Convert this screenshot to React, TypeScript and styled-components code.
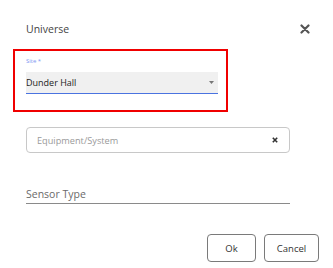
import styled, { createGlobalStyle } from "styled-components";

const GlobalStyle = createGlobalStyle`
    html, body {
        margin: 0;
        padding: 0;
        background: #ffffff;
    }
    body {
        font-family: "Open Sans", "Noto Sans", sans-serif;
        color: #333;
    }
`;

const Dialog = styled.div`
    width: 333px;
    height: 268px;
    box-sizing: border-box;
    background: #fff;
    display: flex;
    flex-direction: column;
`;

const Header = styled.div`
    display: flex;
    align-items: center;
    justify-content: space-between;
    padding: 18px 23px 0 26px;
    height: 22px;
`;

const Title = styled.div`
    font-size: 10.5px;
    line-height: 22px;
    color: #444;
`;

const CloseButton = styled.button`
    border: none;
    background: transparent;
    padding: 0;
    width: 10px;
    height: 10px;
    display: flex;
    cursor: pointer;
`;

const Highlight = styled.div`
    margin: 9px 0 0 13px;
    width: 215px;
    height: 63px;
    box-sizing: border-box;
    border: 2px solid #f00000;
    padding: 5px 0 0 11px;
`;

const FieldLabel = styled.div`
    font-size: 6px;
    line-height: 10px;
    color: #7b96f2;
    height: 10px;
`;

const Select = styled.div`
    margin-top: 6px;
    width: 192px;
    height: 22px;
    box-sizing: border-box;
    background: #f0f0f0;
    border-bottom: 1px solid #4a73e0;
    display: flex;
    align-items: center;
    justify-content: space-between;
    padding: 0 4px 0 0;
`;

const SelectValue = styled.span`
    font-size: 9px;
    color: #222;
`;

const Body = styled.div`
    padding: 0 43px 0 26px;
    display: flex;
    flex-direction: column;
`;

const TextBox = styled.div`
    margin-top: 15px;
    height: 26px;
    box-sizing: border-box;
    border: 1px solid #c8c8c8;
    border-radius: 4px;
    display: flex;
    align-items: center;
    justify-content: space-between;
    padding: 0 11px 0 10px;
`;

const Placeholder = styled.span`
    font-size: 9.2px;
    color: #9a9a9a;
`;

const UnderlineField = styled.div`
    margin-top: 33px;
    height: 17px;
    border-bottom: 1px solid #8a8a8a;
    font-size: 10.5px;
    line-height: 17px;
    color: #6a6a6a;
`;

const Footer = styled.div`
    margin-top: 30px;
    display: flex;
    justify-content: flex-end;
    gap: 8px;
    padding-right: 14px;
`;

const Button = styled.button<{ $w: number }>`
    width: ${(p) => p.$w}px;
    height: 28px;
    box-sizing: border-box;
    border: 1px solid #7a7a7a;
    border-radius: 4px;
    background: #fff;
    font-family: "Open Sans", "Noto Sans", sans-serif;
    font-size: 9.5px;
    color: #333;
    padding: 0;
`;

export default function App() {
    return (
        <>
            <GlobalStyle />
            <Dialog>
                <Header>
                    <Title>Universe</Title>
                    <CloseButton aria-label="close">
                        <svg width="10" height="10" viewBox="0 0 10 10">
                            <path d="M1.5 1.5 L8.5 8.5 M8.5 1.5 L1.5 8.5" stroke="#555" strokeWidth="2.2" strokeLinecap="round" />
                        </svg>
                    </CloseButton>
                </Header>
                <Highlight>
                    <FieldLabel>Site *</FieldLabel>
                    <Select>
                        <SelectValue>Dunder Hall</SelectValue>
                        <svg width="5" height="3" viewBox="0 0 5 3">
                            <path d="M0 0 H5 L2.5 3 Z" fill="#777" />
                        </svg>
                    </Select>
                </Highlight>
                <Body>
                    <TextBox>
                        <Placeholder>Equipment/System</Placeholder>
                        <svg width="6" height="6" viewBox="0 0 6 6">
                            <path d="M0.8 0.8 L5.2 5.2 M5.2 0.8 L0.8 5.2" stroke="#333" strokeWidth="1.6" />
                        </svg>
                    </TextBox>
                    <UnderlineField>Sensor Type</UnderlineField>
                </Body>
                <Footer>
                    <Button $w={49}>Ok</Button>
                    <Button $w={55}>Cancel</Button>
                </Footer>
            </Dialog>
        </>
    );
}
